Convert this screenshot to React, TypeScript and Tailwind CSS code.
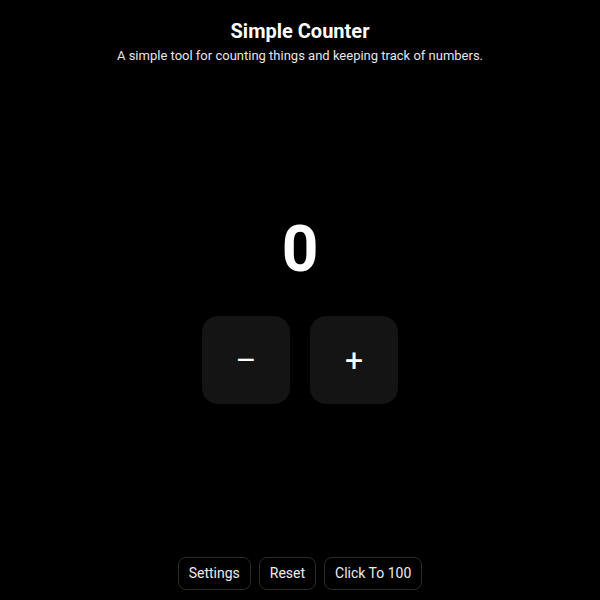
import React, { useState } from 'react';

export default function App() {
  const [count, setCount] = useState(0);

  return (
    <div
      className="h-[600px] w-full bg-black text-white flex flex-col items-center"
      style={{ fontFamily: 'Roboto, "Noto Sans", sans-serif' }}
    >
      {/* Header */}
      <header className="pt-[18px] text-center">
        <h1 className="text-[20px] leading-[26px] font-bold">Simple Counter</h1>
        <p className="mt-[3px] text-[13px] leading-[18px] text-[#e5e5e5]">
          A simple tool for counting things and keeping track of numbers.
        </p>
      </header>

      {/* Counter */}
      <main className="flex-1 flex flex-col items-center justify-center">
        <div className="text-[64px] leading-none font-bold">{count}</div>
        <div className="mt-[34px] flex gap-5">
          <button
            onClick={() => setCount((c) => c - 1)}
            className="w-[88px] h-[88px] rounded-2xl bg-[#141414] text-[32px] font-normal flex items-center justify-center"
          >
            –
          </button>
          <button
            onClick={() => setCount((c) => c + 1)}
            className="w-[88px] h-[88px] rounded-2xl bg-[#141414] text-[32px] font-normal flex items-center justify-center"
          >
            +
          </button>
        </div>
      </main>

      {/* Footer actions */}
      <footer className="pb-[10px] flex gap-2">
        <button className="h-[33px] px-[10px] rounded-lg border border-[#2a2a2a] text-[14px] text-[#ededed]">
          Settings
        </button>
        <button
          onClick={() => setCount(0)}
          className="h-[33px] px-[10px] rounded-lg border border-[#2a2a2a] text-[14px] text-[#ededed]"
        >
          Reset
        </button>
        <button
          onClick={() => setCount(100)}
          className="h-[33px] px-[10px] rounded-lg border border-[#2a2a2a] text-[14px] text-[#ededed]"
        >
          Click To 100
        </button>
      </footer>
    </div>
  );
}
